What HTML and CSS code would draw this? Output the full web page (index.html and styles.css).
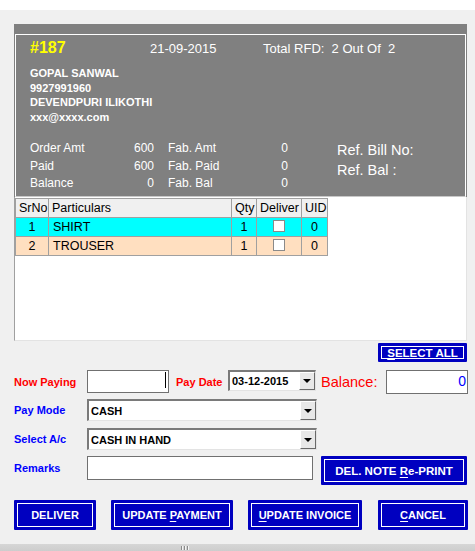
FILE: index.html
```html
<!DOCTYPE html>
<html>
<head>
<meta charset="utf-8">
<link rel="stylesheet" href="styles.css">
</head>
<body>
<div class="topstrip"></div>
<div class="main">
  <div class="panel">
    <div class="inner">
      <div class="hdr">
        <span class="bill">#187</span>
        <span class="date">21-09-2015</span>
        <span class="rfd">Total RFD:  2 Out Of  2</span>
      </div>
      <div class="cust">
        <div>GOPAL SANWAL</div>
        <div>9927991960</div>
        <div>DEVENDPURI ILIKOTHI</div>
        <div>xxx@xxxx.com</div>
      </div>
      <div class="amounts">
        <div class="amt-grid">
          <span>Order Amt</span><span class="num">600</span><span class="fab">Fab. Amt</span><span class="num">0</span>
          <span>Paid</span><span class="num">600</span><span class="fab">Fab. Paid</span><span class="num">0</span>
          <span>Balance</span><span class="num">0</span><span class="fab">Fab. Bal</span><span class="num">0</span>
        </div>
        <div class="ref">
          <div>Ref. Bill No:</div>
          <div>Ref. Bal :</div>
        </div>
      </div>
    </div>
  </div>

  <div class="gridbox">
    <table class="grid">
      <colgroup>
        <col class="c-sr"><col class="c-part"><col class="c-qty"><col class="c-del"><col class="c-uid">
      </colgroup>
      <thead>
        <tr><th>SrNo</th><th>Particulars</th><th>Qty</th><th>Deliver</th><th>UID</th></tr>
      </thead>
      <tbody>
        <tr class="r-cyan"><td class="ctr">1</td><td class="part">SHIRT</td><td class="ctr">1</td><td class="ctr"><span class="cb"></span></td><td class="ctr">0</td></tr>
        <tr class="r-peach"><td class="ctr">2</td><td class="part">TROUSER</td><td class="ctr">1</td><td class="ctr"><span class="cb"></span></td><td class="ctr">0</td></tr>
      </tbody>
    </table>
  </div>

  <div class="selrow">
    <button class="btn b-sel"><span><u>S</u>ELECT ALL</span></button>
  </div>

  <div class="form">
    <div class="row row-a">
      <span class="lbl red">Now Paying</span>
      <div class="tbox paying"><span class="caret"></span></div>
      <span class="lbl-date red">Pay Date</span>
      <div class="combo dbox">
        <span class="ctext">03-12-2015</span>
        <span class="dd"><span class="tri"></span></span>
      </div>
      <span class="lbl-bal">Balance:</span>
      <div class="tbox balbox">0</div>
    </div>
    <div class="row row-b">
      <span class="lbl blue">Pay Mode</span>
      <div class="combo sel">
        <span class="ctext">CASH</span>
        <span class="dd"><span class="tri"></span></span>
      </div>
    </div>
    <div class="row row-c">
      <span class="lbl blue">Select A/c</span>
      <div class="combo sel">
        <span class="ctext">CASH IN HAND</span>
        <span class="dd"><span class="tri"></span></span>
      </div>
    </div>
    <div class="row row-d">
      <span class="lbl blue lbl-rem">Remarks</span>
      <div class="tbox remarks"></div>
      <button class="btn b-reprint"><span>DEL. NOTE <u>R</u>e-PRINT</span></button>
    </div>
  </div>

  <div class="actions">
    <button class="btn b-deliver"><span>DELIVER</span></button>
    <button class="btn b-pay"><span>UPDATE <u>P</u>AYMENT</span></button>
    <button class="btn b-inv"><span><u>U</u>PDATE INVOICE</span></button>
    <button class="btn b-cancel"><span><u>C</u>ANCEL</span></button>
  </div>
</div>
<div class="statusbar">
  <span class="grip"><i></i><i></i><i></i></span>
</div>
</body>
</html>
```

FILE: styles.css
```css
html, body {
  margin: 0;
  padding: 0;
}
body {
  width: 475px;
  height: 551px;
  overflow: hidden;
  background: #f0f0f0;
  font-family: "Liberation Sans", Arial, sans-serif;
}
.topstrip {
  height: 10px;
  background: #ffffff;
}
.main {
  padding: 14px 0 0 14px;
}

/* ---------- header panel ---------- */
.panel {
  width: 453px;
  box-sizing: border-box;
  background: #808080;
  padding: 10px 1px 0 1px;
}
.inner {
  height: 163px;
  box-sizing: border-box;
  border: 1px solid #ffffff;
  border-bottom-color: #c8c8c8;
  padding: 3px 0 0 14px;
  color: #ffffff;
}
.hdr {
  display: flex;
  align-items: baseline;
  height: 19px;
  line-height: 19px;
}
.bill {
  width: 120px;
  font-size: 16px;
  font-weight: bold;
  color: #ffff00;
}
.date {
  width: 113px;
  font-size: 13px;
}
.rfd {
  font-size: 13px;
  white-space: pre;
}
.cust {
  margin-top: 9px;
  font-size: 11px;
  font-weight: bold;
  line-height: 14.5px;
}
.amounts {
  margin-top: 16px;
  display: flex;
}
.amt-grid {
  display: grid;
  grid-template-columns: 94px 30px 104px 30px;
  font-size: 12px;
  line-height: 17.5px;
}
.num {
  text-align: right;
}
.fab {
  padding-left: 14px;
}
.ref {
  margin-left: 49px;
  font-size: 14.5px;
  line-height: 20px;
}

/* ---------- grid ---------- */
.gridbox {
  width: 453px;
  height: 144px;
  box-sizing: border-box;
  background: #ffffff;
  border-left: 1px solid #a0a0a0;
  border-right: 1px solid #e3e3e3;
  border-bottom: 1px solid #e3e3e3;
  padding-top: 1px;
}
.grid {
  border-collapse: collapse;
  table-layout: fixed;
  width: 313px;
  font-size: 12.5px;
  color: #000000;
  border-right: 1px solid #808080;
  border-bottom: 1px solid #808080;
}
.c-sr { width: 33px; }
.c-part { width: 183px; }
.c-qty { width: 25px; }
.c-del { width: 45px; }
.c-uid { width: 26px; }
.grid tr {
  height: 19px;
}
.grid th,
.grid td {
  border: 1px solid #a0a0a0;
  padding: 0 0 0 3px;
  line-height: 17px;
  white-space: nowrap;
  overflow: hidden;
}
.grid th {
  background: #f0f0f0;
  font-weight: normal;
  text-align: left;
}
.grid td.ctr {
  text-align: center;
  padding: 0;
}
.grid td.part {
  padding-left: 4px;
}
.r-cyan td {
  background: #00ffff;
}
.r-peach td {
  background: #ffdfc0;
}
.cb {
  display: inline-block;
  width: 12px;
  height: 12px;
  box-sizing: border-box;
  border: 1px solid #8a8a8a;
  background: #ffffff;
  vertical-align: middle;
  margin-top: -2px;
}

/* ---------- buttons ---------- */
.btn {
  display: flex;
  align-items: center;
  justify-content: center;
  box-sizing: border-box;
  padding: 0;
  border: none;
  border-radius: 1px;
  background: #0000c0;
  color: #ffffff;
  outline: 1px solid #ffffff;
  outline-offset: -4px;
  font-family: "Liberation Sans", Arial, sans-serif;
  font-size: 11px;
  font-weight: bold;
  white-space: pre;
}
.btn u {
  text-underline-offset: 2px;
}
.selrow {
  width: 453px;
  display: flex;
  justify-content: flex-end;
  margin-top: 2px;
}
.b-sel {
  width: 89px;
  height: 19px;
  font-size: 11.5px;
}

/* ---------- form ---------- */
.form {
  margin-top: 8px;
  display: flex;
  flex-direction: column;
}
.row {
  display: flex;
  align-items: center;
}
.lbl {
  width: 73px;
  font-size: 11px;
  font-weight: bold;
}
.red { color: #ff0000; }
.blue { color: #0000ff; }

.row-a {
  height: 24px;
}
.tbox {
  box-sizing: border-box;
  border: 1px solid #707070;
  background: #ffffff;
}
.paying {
  width: 82px;
  height: 23px;
  align-self: flex-start;
  display: flex;
  justify-content: flex-end;
  align-items: flex-start;
}
.caret {
  width: 1px;
  height: 16px;
  background: #000000;
  margin: 1px 2px 0 0;
}
.lbl-date {
  width: 52px;
  margin-left: 7px;
  font-size: 11px;
  font-weight: bold;
}
.combo {
  box-sizing: border-box;
  display: flex;
  align-items: stretch;
  background: #ffffff;
  border-top: 2px solid #7a7a7a;
  border-left: 2px solid #7a7a7a;
  border-right: 1px solid #e3e3e3;
  border-bottom: 1px solid #e3e3e3;
}
.ctext {
  flex: 1;
  display: flex;
  align-items: center;
  padding-left: 2px;
  font-size: 11px;
  font-weight: bold;
  color: #000000;
}
.dd {
  width: 16px;
  box-sizing: border-box;
  background: #e8e8e8;
  border-top: 1px solid #ffffff;
  border-left: 1px solid #ffffff;
  border-right: 1px solid #696969;
  border-bottom: 1px solid #696969;
  display: flex;
  align-items: center;
  justify-content: center;
}
.tri {
  width: 0;
  height: 0;
  border-left: 4px solid transparent;
  border-right: 4px solid transparent;
  border-top: 4px solid #000000;
}
.dbox {
  width: 88px;
  height: 21px;
  align-self: flex-start;
}
.lbl-bal {
  width: 65px;
  margin-left: 5px;
  font-size: 14.5px;
  color: #ff0000;
}
.balbox {
  width: 82px;
  height: 24px;
  text-align: right;
  padding-right: 1px;
  font-size: 14px;
  line-height: 20px;
  color: #0000ff;
}

.row-b {
  margin-top: 5px;
}
.row-c {
  margin-top: 7px;
}
.sel {
  width: 230px;
  height: 22px;
}
.row-d {
  margin-top: 6px;
  align-items: flex-start;
}
.lbl-rem {
  line-height: 24px;
}
.remarks {
  width: 226px;
  height: 24px;
}
.b-reprint {
  width: 146px;
  height: 29px;
  margin-left: 8px;
  font-size: 11.5px;
}

/* ---------- action buttons ---------- */
.actions {
  margin-top: 15px;
  display: flex;
}
.actions .btn {
  height: 30px;
}
.b-deliver { width: 82px; }
.b-pay { width: 122px; margin-left: 15px; }
.b-inv { width: 114px; margin-left: 15px; }
.b-cancel { width: 90px; margin-left: 16px; }

/* ---------- status bar ---------- */
.statusbar {
  margin-top: 14px;
  height: 7px;
  background: linear-gradient(#d6d6d6, #cdcdcd);
  display: flex;
  align-items: center;
  padding-left: 181px;
}
.grip {
  display: flex;
  gap: 1px;
}
.grip i {
  display: block;
  width: 2px;
  height: 4px;
  background: linear-gradient(90deg, #8a8a8a 50%, #f4f4f4 50%);
}
```
